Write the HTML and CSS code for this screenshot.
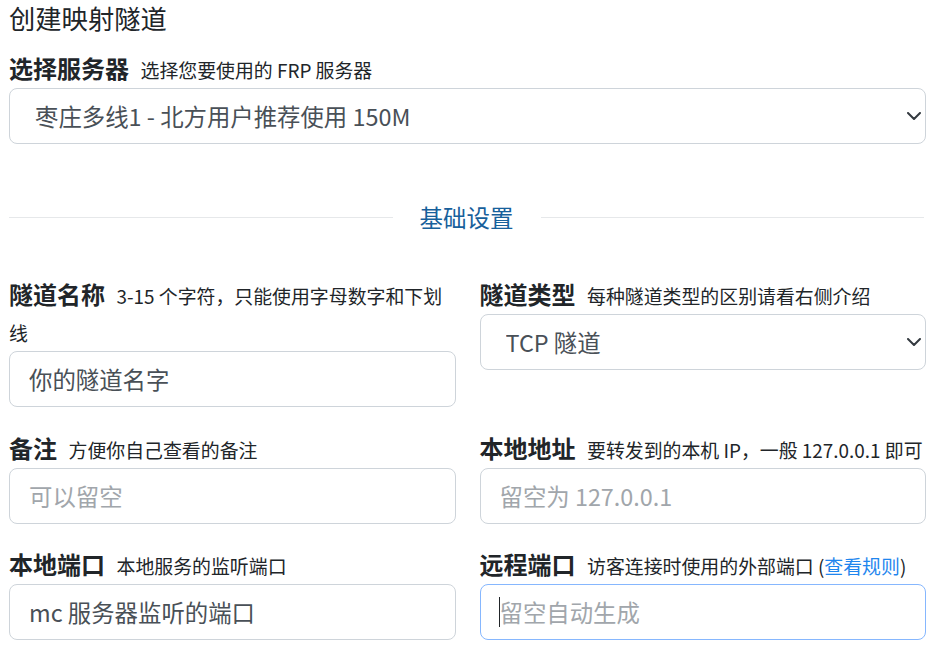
FILE: index.html
```html
<!DOCTYPE html>
<html lang="zh-CN">
<head>
<meta charset="utf-8">
<title>创建映射隧道</title>
<link rel="stylesheet" href="styles.css">
</head>
<body>
<div class="page">
  <h1 class="title">创建映射隧道</h1>

  <div class="field">
    <label class="label">选择服务器<small class="hint">选择您要使用的 FRP 服务器</small></label>
    <div class="select-wrap">
      <select class="control select"><option>枣庄多线1 - 北方用户推荐使用 150M</option></select>
      <svg class="chevron" width="14" height="8" viewBox="0 0 14 8"><path d="M1 1L7 7L13 1"/></svg>
    </div>
  </div>

  <div class="divider"><span class="divider-text">基础设置</span></div>

  <div class="grid">
    <div class="field">
      <label class="label">隧道名称<small class="hint">3-15 个字符，只能使用字母数字和下划线</small></label>
      <input class="control" type="text" value="你的隧道名字">
    </div>
    <div class="field">
      <label class="label">隧道类型<small class="hint">每种隧道类型的区别请看右侧介绍</small></label>
      <div class="select-wrap">
        <select class="control select"><option>TCP 隧道</option></select>
        <svg class="chevron" width="14" height="8" viewBox="0 0 14 8"><path d="M1 1L7 7L13 1"/></svg>
      </div>
    </div>
    <div class="field">
      <label class="label">备注<small class="hint">方便你自己查看的备注</small></label>
      <input class="control" type="text" placeholder="可以留空">
    </div>
    <div class="field">
      <label class="label">本地地址<small class="hint">要转发到的本机 IP，一般 127.0.0.1 即可</small></label>
      <input class="control" type="text" placeholder="留空为 127.0.0.1">
    </div>
    <div class="field">
      <label class="label">本地端口<small class="hint">本地服务的监听端口</small></label>
      <input class="control" type="text" value="mc 服务器监听的端口">
    </div>
    <div class="field">
      <label class="label">远程端口<small class="hint">访客连接时使用的外部端口 (<a class="link" href="#">查看规则</a>)</small></label>
      <div class="input-wrap">
        <input class="control focused" type="text" placeholder="留空自动生成">
        <span class="caret"></span>
      </div>
    </div>
  </div>
</div>
</body>
</html>
```

FILE: styles.css
```css
html, body {
  margin: 0;
  padding: 0;
  background: #ffffff;
}

body {
  font-family: "Noto Sans CJK SC", "Noto Sans", sans-serif;
  color: #212529;
}

.page {
  margin-left: 9px;
  width: 917px;
}

.title {
  font-size: 26.3px;
  line-height: 35px;
  font-weight: 400;
  margin: 0 0 14px;
}

.field {
  display: flex;
  flex-direction: column;
}

.label {
  display: block;
  font-size: 24px;
  font-weight: 700;
  line-height: 37.5px;
  margin-bottom: 1.5px;
}

.hint {
  font-size: 18.9px;
  font-weight: 400;
  line-height: 1;
  margin-left: 11.5px;
}

.link {
  color: #1f86ee;
  text-decoration: none;
}

.control {
  box-sizing: border-box;
  display: block;
  width: 100%;
  height: 56px;
  margin: 0;
  border: 1px solid #ced4da;
  border-radius: 8px;
  background: #ffffff;
  font-family: "Noto Sans CJK SC", "Noto Sans", sans-serif;
  font-size: 23.4px;
  color: #495057;
  padding: 0 19px;
  outline: none;
}

.control::placeholder {
  color: #a1a6ab;
  opacity: 1;
}

.control.focused {
  border-color: #86b7fe;
}

.select {
  -webkit-appearance: none;
  appearance: none;
  padding-left: 25px;
  padding-right: 40px;
}

.select-wrap,
.input-wrap {
  position: relative;
}

.chevron {
  position: absolute;
  right: 5px;
  top: 50%;
  margin-top: -4px;
  pointer-events: none;
}

.chevron path {
  fill: none;
  stroke: #343a40;
  stroke-width: 2;
  stroke-linecap: round;
  stroke-linejoin: round;
}

.caret {
  position: absolute;
  left: 19px;
  top: 13px;
  width: 1.6px;
  height: 30px;
  background: #212529;
}

.divider {
  display: flex;
  align-items: center;
  gap: 27px;
  margin: 56px 2px 39.5px 0;
  color: #17609b;
  font-size: 23.5px;
  line-height: 35px;
}

.divider::before,
.divider::after {
  content: "";
  flex: 1;
  height: 1px;
  background: #e6e8ea;
}

.grid {
  display: grid;
  grid-template-columns: 1fr 1fr;
  column-gap: 24px;
  row-gap: 21.5px;
  align-items: start;
}
```
